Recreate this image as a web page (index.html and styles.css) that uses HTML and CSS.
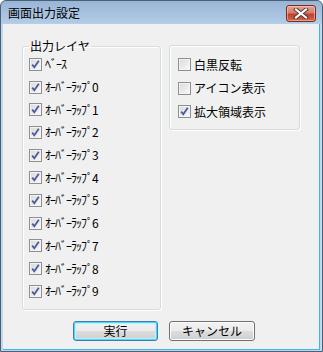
FILE: index.html
```html
<!DOCTYPE html>
<html lang="ja">
<head>
<meta charset="utf-8">
<link rel="stylesheet" href="styles.css">
</head>
<body>
<div class="window">
  <div class="titlebar">
    <span class="title">画面出力設定</span>
    <span class="close"><svg width="16" height="11" viewBox="0 0 16 11"><path d="M3 1.5 L13 9.5 M13 1.5 L3 9.5" stroke="#4a3030" stroke-width="4" stroke-linecap="square"/><path d="M3 1.5 L13 9.5 M13 1.5 L3 9.5" stroke="#fff" stroke-width="2.2" stroke-linecap="square"/></svg></span>
  </div>
  <div class="client">
    <div class="panels">
      <fieldset class="group layers">
        <legend class="group-title">出力レイヤ</legend>
        <label class="row hw"><span class="cb on"></span>ﾍﾞｰｽ</label>
        <label class="row hw"><span class="cb on"></span>ｵｰﾊﾞｰﾗｯﾌﾟ0</label>
        <label class="row hw"><span class="cb on"></span>ｵｰﾊﾞｰﾗｯﾌﾟ1</label>
        <label class="row hw"><span class="cb on"></span>ｵｰﾊﾞｰﾗｯﾌﾟ2</label>
        <label class="row hw"><span class="cb on"></span>ｵｰﾊﾞｰﾗｯﾌﾟ3</label>
        <label class="row hw"><span class="cb on"></span>ｵｰﾊﾞｰﾗｯﾌﾟ4</label>
        <label class="row hw"><span class="cb on"></span>ｵｰﾊﾞｰﾗｯﾌﾟ5</label>
        <label class="row hw"><span class="cb on"></span>ｵｰﾊﾞｰﾗｯﾌﾟ6</label>
        <label class="row hw"><span class="cb on"></span>ｵｰﾊﾞｰﾗｯﾌﾟ7</label>
        <label class="row hw"><span class="cb on"></span>ｵｰﾊﾞｰﾗｯﾌﾟ8</label>
        <label class="row hw"><span class="cb on"></span>ｵｰﾊﾞｰﾗｯﾌﾟ9</label>
      </fieldset>
      <div class="group options">
        <label class="row"><span class="cb"></span>白黒反転</label>
        <label class="row"><span class="cb"></span>アイコン表示</label>
        <label class="row"><span class="cb on"></span>拡大領域表示</label>
      </div>
    </div>
    <div class="buttons">
      <button class="btn default">実行</button>
      <button class="btn">キャンセル</button>
    </div>
  </div>
</div>
</body>
</html>
```

FILE: styles.css
```css
* { box-sizing: border-box; }
html, body { margin: 0; padding: 0; }
body {
  width: 323px;
  height: 352px;
  background: #ffffff;
  font-family: "Noto Sans CJK JP", sans-serif;
  font-size: 12px;
  color: #000;
}
.window {
  width: 323px;
  height: 352px;
  border: 1px solid #4b6075;
  border-radius: 6px 6px 0 0;
  background: linear-gradient(to bottom, #99b5d6 0px, #b3cbe6 22px, #c2d7ee 24px, #c2d7ee 100%);
  display: flex;
  flex-direction: column;
  padding: 0 1px 1px 1px;
}
.titlebar {
  height: 23px;
  flex: none;
  display: flex;
  align-items: center;
  justify-content: space-between;
  padding: 0 5px 0 6px;
}
.title {
  font-size: 12px;
  line-height: 14px;
  color: #000;
  margin-top: 1px;
}
.close {
  width: 30px;
  height: 17px;
  margin-top: 1px;
  border: 1px solid #7a2a1f;
  border-radius: 3px;
  background: linear-gradient(to bottom, #e8a493 0%, #d47d6a 45%, #c0402c 55%, #d0684c 100%);
  box-shadow: inset 0 0 0 1px rgba(255,220,210,0.5);
  display: flex;
  align-items: center;
  justify-content: center;
}
.close svg { display: block; }
.client {
  flex: 1;
  margin: 0 1px 0 1px;
  background: #f0f0f0;
  border-right: 1px solid #3cb6e2;
  border-bottom: 1px solid #3cb6e2;
  padding: 15px 0 0 0;
}
.panels {
  display: flex;
  align-items: flex-start;
}
.group {
  border: 1px solid #d4dde3;
  border-radius: 3px;
  box-shadow: 1px 1px 0 #ffffff inset, 1px 1px 0 #ffffff;
}
.layers {
  margin: 0 0 0 19px;
  padding: 0 0 0 6px;
  width: 139px;
  height: 271px;
  min-width: 0;
}
.group-title {
  padding: 0 1px;
  margin-left: 0;
  line-height: 14px;
}
.options {
  margin: 6px 0 0 8px;
  width: 131px;
  height: 85px;
  padding: 7px 0 0 8px;
}
.row {
  display: flex;
  align-items: center;
  height: 22.7px;
  line-height: 14px;
  white-space: nowrap;
}
.row.hw { letter-spacing: -1px; }
.options .row { height: 23.5px; }
.cb {
  width: 13px;
  height: 13px;
  flex: none;
  margin-right: 3px;
  border: 1px solid #8e8f8f;
  background:
    linear-gradient(135deg, #d9d9d9 0%, #e9e9e9 50%, #fbfbfb 100%);
  box-shadow: inset 0 0 0 1px #f4f4f4;
}
.cb.on {
  background:
    url("data:image/svg+xml;utf8,<svg xmlns='http://www.w3.org/2000/svg' width='11' height='11' viewBox='0 0 11 11'><path d='M2.2 5.6 L4.3 8.2 L8.8 1.8' fill='none' stroke='%234a5c9c' stroke-width='1.8'/></svg>") center/11px 11px no-repeat,
    linear-gradient(135deg, #d9d9d9 0%, #e9e9e9 50%, #fbfbfb 100%);
}
.buttons {
  display: flex;
  margin: 11px 0 0 70px;
  gap: 11px;
}
.btn {
  font-family: "Noto Sans CJK JP", sans-serif;
  font-size: 12px;
  line-height: 14px;
  height: 20px;
  width: 86px;
  padding: 0;
  border: 1px solid #707070;
  border-radius: 3px;
  background: linear-gradient(to bottom, #f2f2f2 0%, #ebebeb 50%, #dddddd 51%, #cfcfcf 100%);
  box-shadow: inset 0 0 0 1px #fcfcfc;
  color: #000;
}
.btn.default {
  width: 85px;
  border-color: #3c7fb1;
  box-shadow: inset 0 0 0 1px #48d8fb, inset 0 0 0 2px #c4ecf9;
}
```
